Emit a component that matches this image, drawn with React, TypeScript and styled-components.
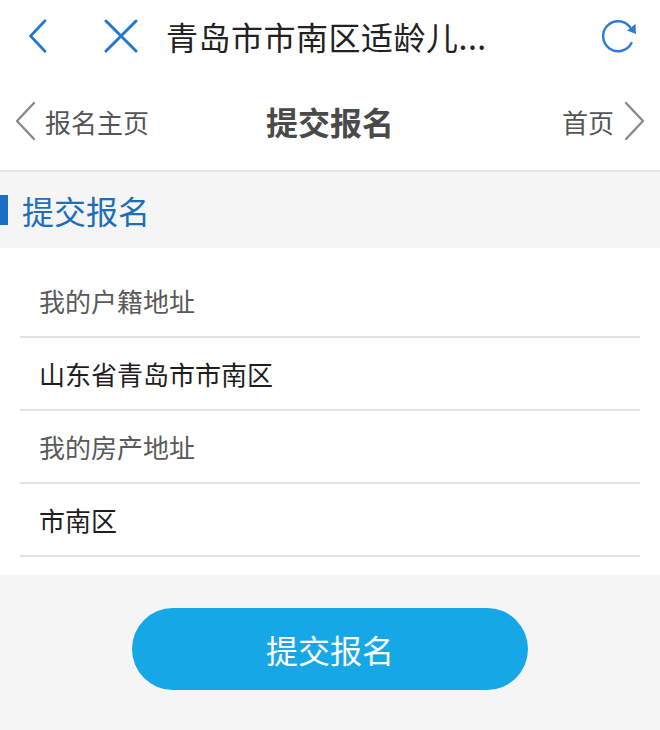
import styled, { createGlobalStyle } from 'styled-components'

const Global = createGlobalStyle`
  html, body {
    margin: 0;
    padding: 0;
    background: #f5f5f5;
  }
  body {
    font-family: "Noto Sans CJK SC", "Noto Sans", sans-serif;
  }
`

const Page = styled.div`
  width: 660px;
  height: 730px;
  background: #f5f5f5;
  display: flex;
  flex-direction: column;
  overflow: hidden;
`

const TopBar = styled.div`
  height: 72px;
  background: #fff;
  display: flex;
  align-items: center;
  padding: 0 20px 0 28px;
`

const IconBtn = styled.div<{ w: number }>`
  width: ${p => p.w}px;
  display: flex;
  align-items: center;
`

const Title = styled.div`
  flex: 1;
  font-size: 32px;
  color: #222;
  letter-spacing: 0.5px;
  padding-left: 2px;
`

const NavBar = styled.div`
  height: 98px;
  background: #fff;
  border-bottom: 2px solid #e6e6e6;
  display: flex;
  align-items: center;
  justify-content: space-between;
  padding: 0 14px;
`

const NavSide = styled.div`
  width: 160px;
  display: flex;
  align-items: center;
  gap: 9px;
  font-size: 26px;
  color: #555;
`

const NavRight = styled(NavSide)`
  justify-content: flex-end;
  gap: 10px;
`

const NavTitle = styled.div`
  font-size: 32px;
  font-weight: 700;
  color: #4a4a4a;
`

const SectionHead = styled.div`
  height: 76px;
  display: flex;
  align-items: center;
  gap: 14px;
`

const Bar = styled.div`
  width: 8px;
  height: 30px;
  background: #1a6fc4;
`

const SectionTitle = styled.div`
  font-size: 32px;
  color: #1d6fb8;
`

const Form = styled.div`
  background: #fff;
  padding: 17px 20px 18px;
`

const Row = styled.div<{ value?: boolean }>`
  height: 73px;
  box-sizing: border-box;
  border-bottom: 2px solid #e4e4e4;
  display: flex;
  align-items: center;
  padding-left: 19px;
  font-size: 26px;
  color: ${p => (p.value ? '#1e1e1e' : '#5a5a5a')};
`

const Footer = styled.div`
  flex: 1;
  display: flex;
  justify-content: center;
  padding-top: 33px;
`

const Submit = styled.button`
  width: 396px;
  height: 82px;
  border: none;
  border-radius: 41px;
  background: #16a7e7;
  color: #fff;
  font-family: inherit;
  font-size: 32px;
`

const Chevron = ({ dir, color, h, sw }: { dir: 'l' | 'r'; color: string; h: number; sw: number }) => (
  <svg width={h * 0.55} height={h} viewBox="0 0 22 40">
    <path
      d={dir === 'l' ? 'M20 2 L3 20 L20 38' : 'M2 2 L19 20 L2 38'}
      fill="none"
      stroke={color}
      strokeWidth={sw}
      strokeLinecap="round"
      strokeLinejoin="round"
    />
  </svg>
)

const Close = () => (
  <svg width="34" height="34" viewBox="0 0 34 34">
    <path d="M2 2 L32 32 M32 2 L2 32" stroke="#2176d6" strokeWidth="3" strokeLinecap="round" />
  </svg>
)

const Refresh = () => (
  <svg width="40" height="40" viewBox="0 0 40 40">
    <path d="M31.5 27 A15 15 0 1 1 30 11" fill="none" stroke="#2f7bd6" strokeWidth="2.4" strokeLinecap="round" />
    <path d="M35.5 8 L36 18 L27 14.5 Z" fill="#2f7bd6" />
  </svg>
)

const rows = [
  { text: '我的户籍地址', value: false },
  { text: '山东省青岛市市南区', value: true },
  { text: '我的房产地址', value: false },
  { text: '市南区', value: true },
]

export default function App() {
  return (
    <Page>
      <Global />
      <TopBar>
        <IconBtn w={76}>
          <Chevron dir="l" color="#2176d6" h={34} sw={3.2} />
        </IconBtn>
        <IconBtn w={60}>
          <Close />
        </IconBtn>
        <Title>青岛市市南区适龄儿...</Title>
        <Refresh />
      </TopBar>
      <NavBar>
        <NavSide>
          <Chevron dir="l" color="#8a8a8a" h={40} sw={2.4} />
          报名主页
        </NavSide>
        <NavTitle>提交报名</NavTitle>
        <NavRight>
          首页
          <Chevron dir="r" color="#8a8a8a" h={40} sw={2.4} />
        </NavRight>
      </NavBar>
      <SectionHead>
        <Bar />
        <SectionTitle>提交报名</SectionTitle>
      </SectionHead>
      <Form>
        {rows.map(r => (
          <Row key={r.text} value={r.value}>
            {r.text}
          </Row>
        ))}
      </Form>
      <Footer>
        <Submit>提交报名</Submit>
      </Footer>
    </Page>
  )
}
